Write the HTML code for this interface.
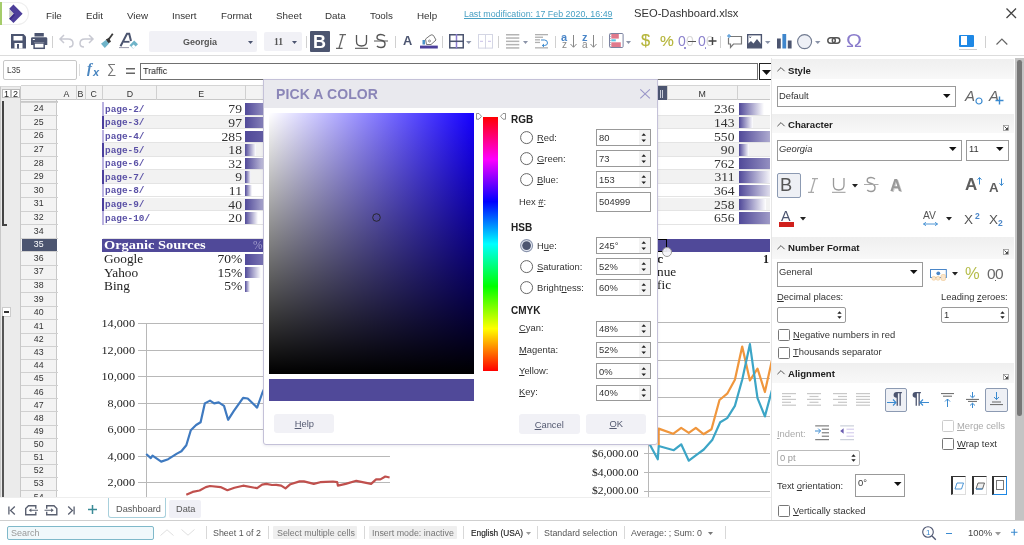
<!DOCTYPE html>
<html><head><meta charset="utf-8">
<style>
*{box-sizing:border-box;margin:0;padding:0}
html,body{width:1024px;height:545px;overflow:hidden;background:#fff}
body{position:relative;font-family:"Liberation Sans",sans-serif;font-size:9.6px;color:#333}
.a{position:absolute}
.t{position:absolute;white-space:nowrap;line-height:1;will-change:transform}
svg{position:absolute;overflow:visible}
.serif{font-family:"Liberation Serif",serif}
.mono{font-family:"Liberation Mono",monospace}
</style></head><body>

<div class="a" style="left:0px;top:85.5px;width:21px;height:411.5px;background:#ebebeb;border-left:1px solid #c8c8c8;border-right:1px solid #c8c8c8;border-top:1px solid #d8d8d8"></div>
<div class="a" style="left:56.8px;top:86px;width:1px;height:14.3px;background:#d0d0d0"></div>
<div class="a" style="left:1.5px;top:88.5px;width:9px;height:9.5px;background:#fff;border:1px solid #bbb"></div>
<div class="a" style="left:11px;top:88.5px;width:9px;height:9.5px;background:#fff;border:1px solid #bbb"></div>
<div class="t" style="left:3.5px;top:89.5px;font-size:9px;color:#222">1</div>
<div class="t" style="left:12.5px;top:89.5px;font-size:9px;color:#222">2</div>
<div class="a" style="left:2.3px;top:101px;width:1.6px;height:124.5px;background:#444"></div>
<div class="a" style="left:2.3px;top:224px;width:5px;height:1.6px;background:#444"></div>
<div class="a" style="left:1.5px;top:307px;width:9px;height:9.5px;background:#fff;border:1px solid #ccc"></div>
<div class="a" style="left:3.5px;top:311.2px;width:5px;height:1.6px;background:#333"></div>
<div class="a" style="left:2.3px;top:316px;width:1.6px;height:181px;background:#555"></div>
<div class="a" style="left:21px;top:85.3px;width:749px;height:15.0px;background:#f3f3f3;border-top:1px solid #d4d4d4;border-bottom:1px solid #c8c8c8"></div>
<div class="a" style="left:21px;top:100px;width:35.8px;height:397px;background:#f3f3f3;border-right:1px solid #c8c8c8"></div>
<div class="a" style="left:75.5px;top:85.3px;width:1px;height:15.0px;background:#d0d0d0"></div>
<div class="t" style="left:57px;top:89.5px;width:19px;text-align:center;font-size:8.8px;color:#333">A</div>
<div class="a" style="left:84.5px;top:85.3px;width:1px;height:15.0px;background:#d0d0d0"></div>
<div class="t" style="left:76px;top:89.5px;width:9px;text-align:center;font-size:8.8px;color:#333">B</div>
<div class="a" style="left:102.0px;top:85.3px;width:1px;height:15.0px;background:#d0d0d0"></div>
<div class="t" style="left:85px;top:89.5px;width:17.5px;text-align:center;font-size:8.8px;color:#333">C</div>
<div class="a" style="left:156.0px;top:85.3px;width:1px;height:15.0px;background:#d0d0d0"></div>
<div class="t" style="left:102.5px;top:89.5px;width:54.0px;text-align:center;font-size:8.8px;color:#333">D</div>
<div class="a" style="left:244.5px;top:85.3px;width:1px;height:15.0px;background:#d0d0d0"></div>
<div class="t" style="left:156.5px;top:89.5px;width:88.5px;text-align:center;font-size:8.8px;color:#333">E</div>
<div class="a" style="left:299.5px;top:85.3px;width:1px;height:15.0px;background:#d0d0d0"></div>
<div class="a" style="left:666.5px;top:85.3px;width:1px;height:15.0px;background:#d0d0d0"></div>
<div class="a" style="left:736.8px;top:85.3px;width:1px;height:15.0px;background:#d0d0d0"></div>
<div class="t" style="left:667px;top:89.5px;width:70.29999999999995px;text-align:center;font-size:8.8px;color:#333">M</div>
<div class="a" style="left:799.5px;top:85.3px;width:1px;height:15.0px;background:#d0d0d0"></div>
<div class="a" style="left:657px;top:85.8px;width:9.5px;height:14.5px;background:#4c5570"></div>
<div class="a" style="left:659.5px;top:89.5px;width:1.2px;height:8px;background:#c8ccd8"></div>
<div class="a" style="left:662px;top:89.5px;width:1.2px;height:8px;background:#c8ccd8"></div>
<div class="a" style="left:21px;top:101.8px;width:36.5px;height:1px;background:#d0d0d0"></div>
<div class="t" style="left:21px;top:104.2px;width:35.5px;text-align:center;font-size:8.8px;color:#333">24</div>
<div class="a" style="left:21px;top:115.39999999999999px;width:36.5px;height:1px;background:#d0d0d0"></div>
<div class="t" style="left:21px;top:117.8px;width:35.5px;text-align:center;font-size:8.8px;color:#333">25</div>
<div class="a" style="left:21px;top:129.0px;width:36.5px;height:1px;background:#d0d0d0"></div>
<div class="t" style="left:21px;top:131.4px;width:35.5px;text-align:center;font-size:8.8px;color:#333">26</div>
<div class="a" style="left:21px;top:142.6px;width:36.5px;height:1px;background:#d0d0d0"></div>
<div class="t" style="left:21px;top:145.0px;width:35.5px;text-align:center;font-size:8.8px;color:#333">27</div>
<div class="a" style="left:21px;top:156.2px;width:36.5px;height:1px;background:#d0d0d0"></div>
<div class="t" style="left:21px;top:158.6px;width:35.5px;text-align:center;font-size:8.8px;color:#333">28</div>
<div class="a" style="left:21px;top:169.79999999999998px;width:36.5px;height:1px;background:#d0d0d0"></div>
<div class="t" style="left:21px;top:172.2px;width:35.5px;text-align:center;font-size:8.8px;color:#333">29</div>
<div class="a" style="left:21px;top:183.39999999999998px;width:36.5px;height:1px;background:#d0d0d0"></div>
<div class="t" style="left:21px;top:185.79999999999998px;width:35.5px;text-align:center;font-size:8.8px;color:#333">30</div>
<div class="a" style="left:21px;top:196.99999999999997px;width:36.5px;height:1px;background:#d0d0d0"></div>
<div class="t" style="left:21px;top:199.39999999999998px;width:35.5px;text-align:center;font-size:8.8px;color:#333">31</div>
<div class="a" style="left:21px;top:210.59999999999997px;width:36.5px;height:1px;background:#d0d0d0"></div>
<div class="t" style="left:21px;top:212.99999999999997px;width:35.5px;text-align:center;font-size:8.8px;color:#333">32</div>
<div class="a" style="left:21px;top:224.19999999999996px;width:36.5px;height:1px;background:#d0d0d0"></div>
<div class="t" style="left:21px;top:226.59999999999997px;width:35.5px;text-align:center;font-size:8.8px;color:#333">34</div>
<div class="a" style="left:21px;top:237.79999999999995px;width:36.5px;height:1px;background:#d0d0d0"></div>
<div class="a" style="left:21.5px;top:238.79999999999995px;width:35.5px;height:12.6px;background:#4c5570"></div>
<div class="t" style="left:21px;top:240.19999999999996px;width:35.5px;text-align:center;font-size:8.8px;color:#fff">35</div>
<div class="a" style="left:21px;top:251.39999999999995px;width:36.5px;height:1px;background:#d0d0d0"></div>
<div class="t" style="left:21px;top:253.79999999999995px;width:35.5px;text-align:center;font-size:8.8px;color:#333">36</div>
<div class="a" style="left:21px;top:264.99999999999994px;width:36.5px;height:1px;background:#d0d0d0"></div>
<div class="t" style="left:21px;top:267.3999999999999px;width:35.5px;text-align:center;font-size:8.8px;color:#333">37</div>
<div class="a" style="left:21px;top:278.59999999999997px;width:36.5px;height:1px;background:#d0d0d0"></div>
<div class="t" style="left:21px;top:280.99999999999994px;width:35.5px;text-align:center;font-size:8.8px;color:#333">38</div>
<div class="a" style="left:21px;top:292.2px;width:36.5px;height:1px;background:#d0d0d0"></div>
<div class="t" style="left:21px;top:294.59999999999997px;width:35.5px;text-align:center;font-size:8.8px;color:#333">39</div>
<div class="a" style="left:21px;top:305.8px;width:36.5px;height:1px;background:#d0d0d0"></div>
<div class="t" style="left:21px;top:308.2px;width:35.5px;text-align:center;font-size:8.8px;color:#333">40</div>
<div class="a" style="left:21px;top:319.40000000000003px;width:36.5px;height:1px;background:#d0d0d0"></div>
<div class="t" style="left:21px;top:321.8px;width:35.5px;text-align:center;font-size:8.8px;color:#333">41</div>
<div class="a" style="left:21px;top:332.54px;width:36.5px;height:1px;background:#d0d0d0"></div>
<div class="t" style="left:21px;top:334.94px;width:35.5px;text-align:center;font-size:8.8px;color:#333">42</div>
<div class="a" style="left:21px;top:345.68px;width:36.5px;height:1px;background:#d0d0d0"></div>
<div class="t" style="left:21px;top:348.08px;width:35.5px;text-align:center;font-size:8.8px;color:#333">43</div>
<div class="a" style="left:21px;top:358.82px;width:36.5px;height:1px;background:#d0d0d0"></div>
<div class="t" style="left:21px;top:361.21999999999997px;width:35.5px;text-align:center;font-size:8.8px;color:#333">44</div>
<div class="a" style="left:21px;top:371.96px;width:36.5px;height:1px;background:#d0d0d0"></div>
<div class="t" style="left:21px;top:374.35999999999996px;width:35.5px;text-align:center;font-size:8.8px;color:#333">45</div>
<div class="a" style="left:21px;top:385.09999999999997px;width:36.5px;height:1px;background:#d0d0d0"></div>
<div class="t" style="left:21px;top:387.49999999999994px;width:35.5px;text-align:center;font-size:8.8px;color:#333">46</div>
<div class="a" style="left:21px;top:398.23999999999995px;width:36.5px;height:1px;background:#d0d0d0"></div>
<div class="t" style="left:21px;top:400.63999999999993px;width:35.5px;text-align:center;font-size:8.8px;color:#333">47</div>
<div class="a" style="left:21px;top:411.37999999999994px;width:36.5px;height:1px;background:#d0d0d0"></div>
<div class="t" style="left:21px;top:413.7799999999999px;width:35.5px;text-align:center;font-size:8.8px;color:#333">48</div>
<div class="a" style="left:21px;top:424.5199999999999px;width:36.5px;height:1px;background:#d0d0d0"></div>
<div class="t" style="left:21px;top:426.9199999999999px;width:35.5px;text-align:center;font-size:8.8px;color:#333">49</div>
<div class="a" style="left:21px;top:437.6599999999999px;width:36.5px;height:1px;background:#d0d0d0"></div>
<div class="t" style="left:21px;top:440.0599999999999px;width:35.5px;text-align:center;font-size:8.8px;color:#333">50</div>
<div class="a" style="left:21px;top:450.7999999999999px;width:36.5px;height:1px;background:#d0d0d0"></div>
<div class="t" style="left:21px;top:453.1999999999999px;width:35.5px;text-align:center;font-size:8.8px;color:#333">51</div>
<div class="a" style="left:21px;top:463.9399999999999px;width:36.5px;height:1px;background:#d0d0d0"></div>
<div class="t" style="left:21px;top:466.33999999999986px;width:35.5px;text-align:center;font-size:8.8px;color:#333">52</div>
<div class="a" style="left:21px;top:477.07999999999987px;width:36.5px;height:1px;background:#d0d0d0"></div>
<div class="t" style="left:21px;top:479.47999999999985px;width:35.5px;text-align:center;font-size:8.8px;color:#333">53</div>
<div class="a" style="left:21px;top:490.21999999999986px;width:36.5px;height:1px;background:#d0d0d0"></div>
<div class="t" style="left:21px;top:492.61999999999983px;width:35.5px;text-align:center;font-size:8.8px;color:#333">54</div>
<div class="a" style="left:21px;top:101.3px;width:36.5px;height:1px;background:#c8c8c8"></div>
<div class="a" style="left:102.5px;top:102.3px;width:160.5px;height:13.6px;background:#fff;border-bottom:1px solid #e4e4e4"></div>
<div class="a" style="left:657px;top:102.3px;width:113px;height:13.6px;background:#fff;border-bottom:1px solid #e4e4e4"></div>
<div class="a" style="left:101.8px;top:102.3px;width:2px;height:13.6px;background:#b9b1e0"></div>
<div class="t" style="left:104.5px;top:104.7px;font-family:'Liberation Mono',monospace;font-weight:bold;font-size:9.4px;color:#5a51a6">page-2/</div>
<div class="t serif" style="left:150px;top:103.3px;width:92px;text-align:right;font-size:12.4px;color:#333;transform:scaleX(1.1);transform-origin:right">79</div>
<div class="a" style="left:245px;top:103.3px;width:18px;height:11.6px;overflow:hidden"><div style="width:50px;height:100%;background:linear-gradient(90deg,#504999,#fff)"></div></div>
<div class="t serif" style="left:680px;top:103.3px;width:54.5px;text-align:right;font-size:12.4px;color:#333;transform:scaleX(1.1);transform-origin:right">236</div>
<div class="a" style="left:738.5px;top:103.3px;width:25px;height:11.6px;overflow:hidden"><div style="width:25px;height:100%;background:linear-gradient(90deg,#504999,#fff)"></div></div>
<div class="a" style="left:102.5px;top:115.89999999999999px;width:160.5px;height:13.6px;background:#f2f2f2;border-bottom:1px solid #e4e4e4"></div>
<div class="a" style="left:657px;top:115.89999999999999px;width:113px;height:13.6px;background:#f2f2f2;border-bottom:1px solid #e4e4e4"></div>
<div class="a" style="left:101.8px;top:115.89999999999999px;width:2px;height:13.6px;background:#4b3f9e"></div>
<div class="t" style="left:104.5px;top:118.3px;font-family:'Liberation Mono',monospace;font-weight:bold;font-size:9.4px;color:#5a51a6">page-3/</div>
<div class="t serif" style="left:150px;top:116.89999999999999px;width:92px;text-align:right;font-size:12.4px;color:#333;transform:scaleX(1.1);transform-origin:right">97</div>
<div class="a" style="left:245px;top:116.89999999999999px;width:18px;height:11.6px;overflow:hidden"><div style="width:60px;height:100%;background:linear-gradient(90deg,#504999,#fff)"></div></div>
<div class="t serif" style="left:680px;top:116.89999999999999px;width:54.5px;text-align:right;font-size:12.4px;color:#333;transform:scaleX(1.1);transform-origin:right">143</div>
<div class="a" style="left:738.5px;top:116.89999999999999px;width:14px;height:11.6px;overflow:hidden"><div style="width:14px;height:100%;background:linear-gradient(90deg,#504999,#fff)"></div></div>
<div class="a" style="left:102.5px;top:129.5px;width:160.5px;height:13.6px;background:#fff;border-bottom:1px solid #e4e4e4"></div>
<div class="a" style="left:657px;top:129.5px;width:113px;height:13.6px;background:#fff;border-bottom:1px solid #e4e4e4"></div>
<div class="a" style="left:101.8px;top:129.5px;width:2px;height:13.6px;background:#b9b1e0"></div>
<div class="t" style="left:104.5px;top:131.9px;font-family:'Liberation Mono',monospace;font-weight:bold;font-size:9.4px;color:#5a51a6">page-4/</div>
<div class="t serif" style="left:150px;top:130.5px;width:92px;text-align:right;font-size:12.4px;color:#333;transform:scaleX(1.1);transform-origin:right">285</div>
<div class="a" style="left:245px;top:130.5px;width:18px;height:11.6px;overflow:hidden"><div style="width:180px;height:100%;background:linear-gradient(90deg,#504999,#fff)"></div></div>
<div class="t serif" style="left:680px;top:130.5px;width:54.5px;text-align:right;font-size:12.4px;color:#333;transform:scaleX(1.1);transform-origin:right">550</div>
<div class="a" style="left:738.5px;top:130.5px;width:31.5px;height:11.6px;overflow:hidden"><div style="width:58px;height:100%;background:linear-gradient(90deg,#504999,#fff)"></div></div>
<div class="a" style="left:102.5px;top:143.1px;width:160.5px;height:13.6px;background:#f2f2f2;border-bottom:1px solid #e4e4e4"></div>
<div class="a" style="left:657px;top:143.1px;width:113px;height:13.6px;background:#f2f2f2;border-bottom:1px solid #e4e4e4"></div>
<div class="a" style="left:101.8px;top:143.1px;width:2px;height:13.6px;background:#4b3f9e"></div>
<div class="t" style="left:104.5px;top:145.5px;font-family:'Liberation Mono',monospace;font-weight:bold;font-size:9.4px;color:#5a51a6">page-5/</div>
<div class="t serif" style="left:150px;top:144.1px;width:92px;text-align:right;font-size:12.4px;color:#333;transform:scaleX(1.1);transform-origin:right">18</div>
<div class="a" style="left:245px;top:144.1px;width:11px;height:11.6px;overflow:hidden"><div style="width:11px;height:100%;background:linear-gradient(90deg,#504999,#fff)"></div></div>
<div class="t serif" style="left:680px;top:144.1px;width:54.5px;text-align:right;font-size:12.4px;color:#333;transform:scaleX(1.1);transform-origin:right">90</div>
<div class="a" style="left:738.5px;top:144.1px;width:10px;height:11.6px;overflow:hidden"><div style="width:10px;height:100%;background:linear-gradient(90deg,#504999,#fff)"></div></div>
<div class="a" style="left:102.5px;top:156.7px;width:160.5px;height:13.6px;background:#fff;border-bottom:1px solid #e4e4e4"></div>
<div class="a" style="left:657px;top:156.7px;width:113px;height:13.6px;background:#fff;border-bottom:1px solid #e4e4e4"></div>
<div class="a" style="left:101.8px;top:156.7px;width:2px;height:13.6px;background:#b9b1e0"></div>
<div class="t" style="left:104.5px;top:159.1px;font-family:'Liberation Mono',monospace;font-weight:bold;font-size:9.4px;color:#5a51a6">page-6/</div>
<div class="t serif" style="left:150px;top:157.7px;width:92px;text-align:right;font-size:12.4px;color:#333;transform:scaleX(1.1);transform-origin:right">32</div>
<div class="a" style="left:245px;top:157.7px;width:18px;height:11.6px;overflow:hidden"><div style="width:28px;height:100%;background:linear-gradient(90deg,#504999,#fff)"></div></div>
<div class="t serif" style="left:680px;top:157.7px;width:54.5px;text-align:right;font-size:12.4px;color:#333;transform:scaleX(1.1);transform-origin:right">762</div>
<div class="a" style="left:738.5px;top:157.7px;width:31.5px;height:11.6px;overflow:hidden"><div style="width:80px;height:100%;background:linear-gradient(90deg,#504999,#fff)"></div></div>
<div class="a" style="left:102.5px;top:170.29999999999998px;width:160.5px;height:13.6px;background:#f2f2f2;border-bottom:1px solid #e4e4e4"></div>
<div class="a" style="left:657px;top:170.29999999999998px;width:113px;height:13.6px;background:#f2f2f2;border-bottom:1px solid #e4e4e4"></div>
<div class="a" style="left:101.8px;top:170.29999999999998px;width:2px;height:13.6px;background:#4b3f9e"></div>
<div class="t" style="left:104.5px;top:172.7px;font-family:'Liberation Mono',monospace;font-weight:bold;font-size:9.4px;color:#5a51a6">page-7/</div>
<div class="t serif" style="left:150px;top:171.29999999999998px;width:92px;text-align:right;font-size:12.4px;color:#333;transform:scaleX(1.1);transform-origin:right">9</div>
<div class="a" style="left:245px;top:171.29999999999998px;width:6px;height:11.6px;overflow:hidden"><div style="width:6px;height:100%;background:linear-gradient(90deg,#504999,#fff)"></div></div>
<div class="t serif" style="left:680px;top:171.29999999999998px;width:54.5px;text-align:right;font-size:12.4px;color:#333;transform:scaleX(1.1);transform-origin:right">311</div>
<div class="a" style="left:738.5px;top:171.29999999999998px;width:31.5px;height:11.6px;overflow:hidden"><div style="width:33px;height:100%;background:linear-gradient(90deg,#504999,#fff)"></div></div>
<div class="a" style="left:102.5px;top:183.89999999999998px;width:160.5px;height:13.6px;background:#fff;border-bottom:1px solid #e4e4e4"></div>
<div class="a" style="left:657px;top:183.89999999999998px;width:113px;height:13.6px;background:#fff;border-bottom:1px solid #e4e4e4"></div>
<div class="a" style="left:101.8px;top:183.89999999999998px;width:2px;height:13.6px;background:#b9b1e0"></div>
<div class="t" style="left:104.5px;top:186.29999999999998px;font-family:'Liberation Mono',monospace;font-weight:bold;font-size:9.4px;color:#5a51a6">page-8/</div>
<div class="t serif" style="left:150px;top:184.89999999999998px;width:92px;text-align:right;font-size:12.4px;color:#333;transform:scaleX(1.1);transform-origin:right">11</div>
<div class="a" style="left:245px;top:184.89999999999998px;width:6.5px;height:11.6px;overflow:hidden"><div style="width:6.5px;height:100%;background:linear-gradient(90deg,#504999,#fff)"></div></div>
<div class="t serif" style="left:680px;top:184.89999999999998px;width:54.5px;text-align:right;font-size:12.4px;color:#333;transform:scaleX(1.1);transform-origin:right">364</div>
<div class="a" style="left:738.5px;top:184.89999999999998px;width:31.5px;height:11.6px;overflow:hidden"><div style="width:38px;height:100%;background:linear-gradient(90deg,#504999,#fff)"></div></div>
<div class="a" style="left:102.5px;top:197.49999999999997px;width:160.5px;height:13.6px;background:#f2f2f2;border-bottom:1px solid #e4e4e4"></div>
<div class="a" style="left:657px;top:197.49999999999997px;width:113px;height:13.6px;background:#f2f2f2;border-bottom:1px solid #e4e4e4"></div>
<div class="a" style="left:101.8px;top:197.49999999999997px;width:2px;height:13.6px;background:#4b3f9e"></div>
<div class="t" style="left:104.5px;top:199.89999999999998px;font-family:'Liberation Mono',monospace;font-weight:bold;font-size:9.4px;color:#5a51a6">page-9/</div>
<div class="t serif" style="left:150px;top:198.49999999999997px;width:92px;text-align:right;font-size:12.4px;color:#333;transform:scaleX(1.1);transform-origin:right">40</div>
<div class="a" style="left:245px;top:198.49999999999997px;width:18px;height:11.6px;overflow:hidden"><div style="width:36px;height:100%;background:linear-gradient(90deg,#504999,#fff)"></div></div>
<div class="t serif" style="left:680px;top:198.49999999999997px;width:54.5px;text-align:right;font-size:12.4px;color:#333;transform:scaleX(1.1);transform-origin:right">258</div>
<div class="a" style="left:738.5px;top:198.49999999999997px;width:27px;height:11.6px;overflow:hidden"><div style="width:27px;height:100%;background:linear-gradient(90deg,#504999,#fff)"></div></div>
<div class="a" style="left:102.5px;top:211.09999999999997px;width:160.5px;height:13.6px;background:#fff;border-bottom:1px solid #e4e4e4"></div>
<div class="a" style="left:657px;top:211.09999999999997px;width:113px;height:13.6px;background:#fff;border-bottom:1px solid #e4e4e4"></div>
<div class="a" style="left:101.8px;top:211.09999999999997px;width:2px;height:13.6px;background:#b9b1e0"></div>
<div class="t" style="left:104.5px;top:213.49999999999997px;font-family:'Liberation Mono',monospace;font-weight:bold;font-size:9.4px;color:#5a51a6">page-10/</div>
<div class="t serif" style="left:150px;top:212.09999999999997px;width:92px;text-align:right;font-size:12.4px;color:#333;transform:scaleX(1.1);transform-origin:right">20</div>
<div class="a" style="left:245px;top:212.09999999999997px;width:13px;height:11.6px;overflow:hidden"><div style="width:13px;height:100%;background:linear-gradient(90deg,#504999,#fff)"></div></div>
<div class="t serif" style="left:680px;top:212.09999999999997px;width:54.5px;text-align:right;font-size:12.4px;color:#333;transform:scaleX(1.1);transform-origin:right">656</div>
<div class="a" style="left:738.5px;top:212.09999999999997px;width:31.5px;height:11.6px;overflow:hidden"><div style="width:69px;height:100%;background:linear-gradient(90deg,#504999,#fff)"></div></div>
<div class="a" style="left:102.5px;top:237.79999999999995px;width:160.5px;height:1px;background:#e4e4e4"></div>
<div class="a" style="left:102px;top:238.5px;width:161px;height:13.8px;background:#504999"></div>
<div class="a" style="left:657px;top:238.5px;width:113px;height:13.8px;background:#504999"></div>
<div class="t" style="left:104.2px;top:239.2px;font-family:'Liberation Serif',serif;font-weight:bold;font-size:12px;color:#fff;transform:scaleX(1.2);transform-origin:left">Organic Sources</div>
<div class="t" style="left:252.7px;top:240px;font-family:'Liberation Serif',serif;font-size:11.5px;color:#a29dcc">%</div>
<div class="t" style="left:104.2px;top:253.89999999999995px;font-family:'Liberation Serif',serif;font-size:11.9px;color:#222;transform:scaleX(1.12);transform-origin:left">Google</div>
<div class="t serif" style="left:200px;top:254.09999999999994px;width:42.4px;text-align:right;font-size:11.9px;color:#222;transform:scaleX(1.14);transform-origin:right">70%</div>
<div class="a" style="left:245.3px;top:253.49999999999994px;width:18px;height:11.2px;background:linear-gradient(90deg,#504999,#7a74b3)"></div>
<div class="t" style="left:104.2px;top:267.49999999999994px;font-family:'Liberation Serif',serif;font-size:11.9px;color:#222;transform:scaleX(1.12);transform-origin:left">Yahoo</div>
<div class="t serif" style="left:200px;top:267.69999999999993px;width:42.4px;text-align:right;font-size:11.9px;color:#222;transform:scaleX(1.14);transform-origin:right">15%</div>
<div class="a" style="left:245.3px;top:267.09999999999997px;width:16px;height:11.2px;background:linear-gradient(90deg,#504999,#fff)"></div>
<div class="t" style="left:104.2px;top:281.09999999999997px;font-family:'Liberation Serif',serif;font-size:11.9px;color:#222;transform:scaleX(1.12);transform-origin:left">Bing</div>
<div class="t serif" style="left:200px;top:281.29999999999995px;width:42.4px;text-align:right;font-size:11.9px;color:#222;transform:scaleX(1.14);transform-origin:right">5%</div>
<div class="a" style="left:245.3px;top:280.7px;width:5px;height:11.2px;background:linear-gradient(90deg,#504999,#fff)"></div>
<div class="t" style="left:657px;top:253.3px;font-family:'Liberation Serif',serif;font-weight:bold;font-size:12px;color:#222;transform:scaleX(1.15);transform-origin:left">c</div>
<div class="t" style="left:657.3px;top:266.6px;font-family:'Liberation Serif',serif;font-size:11.9px;color:#222;transform:scaleX(1.12);transform-origin:left">nue</div>
<div class="t" style="left:657.3px;top:280.2px;font-family:'Liberation Serif',serif;font-size:11.9px;color:#222;transform:scaleX(1.12);transform-origin:left">fic</div>
<div class="t" style="left:763px;top:253.3px;font-family:'Liberation Serif',serif;font-weight:bold;font-size:12px;color:#222">1</div>
<div class="a" style="left:650px;top:238.6px;width:17.2px;height:13.8px;border-top:1.2px solid #000;border-right:1.2px solid #000;border-bottom:1.2px solid #000"></div>
<div class="a" style="left:662px;top:247px;width:10px;height:10px;border-radius:50%;background:rgba(245,245,250,.92);border:1px solid #999"></div>
<div class="a" style="left:138px;top:323px;width:125px;height:1px;background:#b8b8b8"></div>
<div class="t serif" style="left:80px;top:319.09999999999997px;width:55px;text-align:right;font-size:10.6px;color:#222;transform:scaleX(1.15);transform-origin:right">14,000</div>
<div class="a" style="left:138px;top:350px;width:125px;height:1px;background:#b8b8b8"></div>
<div class="t serif" style="left:80px;top:345.59999999999997px;width:55px;text-align:right;font-size:10.6px;color:#222;transform:scaleX(1.15);transform-origin:right">12,000</div>
<div class="a" style="left:138px;top:376px;width:125px;height:1px;background:#b8b8b8"></div>
<div class="t serif" style="left:80px;top:372.09999999999997px;width:55px;text-align:right;font-size:10.6px;color:#222;transform:scaleX(1.15);transform-origin:right">10,000</div>
<div class="a" style="left:138px;top:403px;width:125px;height:1px;background:#b8b8b8"></div>
<div class="t serif" style="left:80px;top:398.59999999999997px;width:55px;text-align:right;font-size:10.6px;color:#222;transform:scaleX(1.15);transform-origin:right">8,000</div>
<div class="a" style="left:138px;top:429px;width:125px;height:1px;background:#b8b8b8"></div>
<div class="t serif" style="left:80px;top:425.09999999999997px;width:55px;text-align:right;font-size:10.6px;color:#222;transform:scaleX(1.15);transform-origin:right">6,000</div>
<div class="a" style="left:138px;top:456px;width:252.3px;height:1px;background:#b8b8b8"></div>
<div class="t serif" style="left:80px;top:451.59999999999997px;width:55px;text-align:right;font-size:10.6px;color:#222;transform:scaleX(1.15);transform-origin:right">4,000</div>
<div class="a" style="left:138px;top:482px;width:252.3px;height:1px;background:#b8b8b8"></div>
<div class="t serif" style="left:80px;top:478.09999999999997px;width:55px;text-align:right;font-size:10.6px;color:#222;transform:scaleX(1.15);transform-origin:right">2,000</div>
<div class="a" style="left:146px;top:323.5px;width:1px;height:173.5px;background:#b8b8b8"></div>
<svg style="left:0;top:0" width="1024" height="545"><polyline points="146.2,454 150.8,458.1 152.5,455.7 161.2,461.6 168.2,459.2 176.9,453.6 181.4,451.2 186.3,445.2 190.8,430.2 196.1,425 200.6,422.2 204.8,403.4 210,400.6 214.2,403.4 218.7,402.4 224,405.9 228.1,419.8 233.7,411.1 243.1,397.8 247.7,398.5 257.1,407.6 262.3,393 266,385" fill="none" stroke="#3f7ac0" stroke-width="2.2" stroke-linejoin="round"/><polyline points="186.3,494.7 192.6,491.9 199.6,490.5 205.8,487.1 210,486 220.5,487.1 227.4,490.2 234.4,487.8 243.1,485.7 257.1,488.2 262.1,484.6 266.3,483.9 272,485 276.2,484.8 281.2,485.6 285.5,488.4 290.4,484.2 299.6,481.4 303.9,481.4 313.8,483.9 320.2,482.2 325.8,481.8 332.9,481.5 337.2,482.2 337.9,485.6 345.7,483.9 356.3,480.8 371.1,483.9 376.1,479.4 380.4,479.4 385.3,476.5 389.6,477.5" fill="none" stroke="#c0504d" stroke-width="2.2" stroke-linejoin="round"/></svg>
<div class="a" style="left:644.4px;top:322px;width:126px;height:1px;background:#b8b8b8"></div>
<div class="a" style="left:644.4px;top:342px;width:126px;height:1px;background:#b8b8b8"></div>
<div class="a" style="left:644.4px;top:360px;width:126px;height:1px;background:#b8b8b8"></div>
<div class="a" style="left:644.4px;top:378px;width:126px;height:1px;background:#b8b8b8"></div>
<div class="a" style="left:644.4px;top:397px;width:126px;height:1px;background:#b8b8b8"></div>
<div class="a" style="left:644.4px;top:416px;width:126px;height:1px;background:#b8b8b8"></div>
<div class="a" style="left:644.4px;top:434px;width:126px;height:1px;background:#b8b8b8"></div>
<div class="a" style="left:644.4px;top:453px;width:126px;height:1px;background:#b8b8b8"></div>
<div class="a" style="left:644.4px;top:472px;width:126px;height:1px;background:#b8b8b8"></div>
<div class="a" style="left:644.4px;top:491px;width:126px;height:1px;background:#b8b8b8"></div>
<div class="t serif" style="left:570px;top:448.8px;width:68.5px;text-align:right;font-size:10.6px;color:#222;transform:scaleX(1.1);transform-origin:right">$6,000.00</div>
<div class="t serif" style="left:570px;top:467.7px;width:68.5px;text-align:right;font-size:10.6px;color:#222;transform:scaleX(1.1);transform-origin:right">$4,000.00</div>
<div class="t serif" style="left:570px;top:486.40000000000003px;width:68.5px;text-align:right;font-size:10.6px;color:#222;transform:scaleX(1.1);transform-origin:right">$2,000.00</div>
<div class="a" style="left:648px;top:320px;width:1px;height:177px;background:#b8b8b8"></div>
<svg style="left:0;top:0" width="1024" height="545"><polyline points="658.7,445.5 658.7,428.6 673.1,433.8 681.2,427.9 688.8,432.8 695.8,427.9 703.5,434.2 711.5,429.3 719.5,400 727.2,393.7 734.9,379.8 742.2,346.6 749.9,380.5 757.5,368.6 764.9,392 772,360" fill="none" stroke="#f0963c" stroke-width="2.2" stroke-linejoin="round"/><polyline points="648.7,442.5 657.8,459.3 658.7,446 673.8,450.2 681.2,444.3 688.8,460.7 696.5,454.8 703.8,449.5 712.2,440.1 720.2,422.3 727.2,418.1 734.9,405.9 742.2,379.8 749.9,344.2 757.5,398.2 764.9,416.4 772,390" fill="none" stroke="#3ca5c6" stroke-width="2.2" stroke-linejoin="round"/></svg>
<div class="a" style="left:0px;top:0px;width:1024px;height:56px;background:#fff"></div>
<div class="a" style="left:0px;top:2px;width:2.1px;height:23.4px;background:#a5cc6a"></div>
<div class="a" style="left:2px;top:2px;width:26.5px;height:23.4px;border:1px solid #eee;border-left:none;border-radius:0 11.5px 11.5px 0;background:#fff"></div>
<svg style="left:0px;top:0px;" width="30" height="28" viewBox="0 0 30 28"><polygon points="9.2,9.3 13.9,13.8 9.2,18.3" fill="#c8c8c8"/><polygon points="13.45,4.6 22.6,13.8 13.45,22.9 9.2,18.7 13.9,13.8 9.2,8.8" fill="#4d3f9a"/><polygon points="9.2,18.7 13.9,13.8 15,15 10.5,19.9" fill="#3a2a88"/></svg>
<div class="t" style="left:46.3px;top:10.6px;font-size:9.8px;color:#333">File</div>
<div class="t" style="left:86.2px;top:10.6px;font-size:9.8px;color:#333">Edit</div>
<div class="t" style="left:127.3px;top:10.6px;font-size:9.8px;color:#333">View</div>
<div class="t" style="left:172.2px;top:10.6px;font-size:9.8px;color:#333">Insert</div>
<div class="t" style="left:221px;top:10.6px;font-size:9.8px;color:#333">Format</div>
<div class="t" style="left:276.2px;top:10.6px;font-size:9.8px;color:#333">Sheet</div>
<div class="t" style="left:325.3px;top:10.6px;font-size:9.8px;color:#333">Data</div>
<div class="t" style="left:370px;top:10.6px;font-size:9.8px;color:#333">Tools</div>
<div class="t" style="left:417.3px;top:10.6px;font-size:9.8px;color:#333">Help</div>
<div class="t" style="left:464px;top:9.9px;font-size:8.9px;color:#4aa1c4;text-decoration:underline">Last modification: 17 Feb 2020, 16:49</div>
<div class="t" style="left:634px;top:7.8px;font-size:11.2px;color:#333">SEO-Dashboard.xlsx</div>
<svg style="left:1006.4px;top:7.9px;" width="10.5" height="10.5" viewBox="0 0 10.5 10.5"><path d="M0.5,0.5L10,10M10,0.5L0.5,10" stroke="#444" stroke-width="1.3"/></svg>
<div class="a" style="left:0px;top:54.8px;width:1024px;height:1.6px;background:#dcdcdc"></div>
<svg style="left:11px;top:33.7px;" width="15" height="14.6" viewBox="0 0 15 14.6"><path d="M0,0H12.5L15,2.5V14.6H0Z" fill="#4c5570"/><rect x="2.5" y="2" width="9" height="4.5" fill="#fff"/><rect x="3.5" y="9" width="8" height="5.6" fill="#fff"/><rect x="6" y="10" width="2" height="4.6" fill="#4c5570"/></svg>
<svg style="left:30.7px;top:33px;" width="16.3" height="15.3" viewBox="0 0 16.3 15.3"><rect x="3.5" y="0" width="9.3" height="3.5" fill="#4c5570"/><path d="M0,5.5Q0,4.2 1.5,4.2H14.8Q16.3,4.2 16.3,5.5V12H13.2V9H3.1V12H0Z" fill="#4c5570"/><rect x="3.1" y="10" width="10.1" height="5.3" fill="none" stroke="#4c5570" stroke-width="1.5"/><rect x="1.8" y="6" width="2" height="1" fill="#fff"/></svg>
<div class="a" style="left:51.8px;top:35.6px;width:1px;height:12.100000000000001px;background:#d0d0d0"></div>
<svg style="left:58.6px;top:34px;" width="15" height="14" viewBox="0 0 15 14"><path d="M5,1L1,5L5,9M1,5H9Q14,5 14,9.5Q14,13 10,13" fill="none" stroke="#c8c9d2" stroke-width="1.5"/></svg>
<svg style="left:79px;top:34px;" width="15" height="14" viewBox="0 0 15 14"><path d="M10,1L14,5L10,9M14,5H6Q1,5 1,9.5Q1,13 5,13" fill="none" stroke="#c8c9d2" stroke-width="1.5"/></svg>
<svg style="left:101px;top:33px;" width="12.5" height="15" viewBox="0 0 12.5 15"><path d="M11.8,0.8L7.2,7" stroke="#3a3a3a" stroke-width="1.8"/><path d="M4.8,6.5L8,4.8L10,8.8L7,10.5Z" fill="#3a3a3a"/><path d="M0,10.8L4.8,7L8,10.6L3.8,15Z" fill="#6fb4c9"/></svg>
<svg style="left:119.3px;top:33.3px;" width="20" height="15.5" viewBox="0 0 20 15.5"><path d="M1.5,13.3L8,0.8H10.2L12,8" fill="none" stroke="#4c5570" stroke-width="2"/><path d="M4.5,8.8H10.5" stroke="#4c5570" stroke-width="1.8"/><path d="M0,14.6H10" stroke="#99a" stroke-width="1"/><path d="M10.5,12.2L15.2,7.5L19,11.2L14.3,15.8Z" fill="#6fb4c9"/><path d="M12.5,13.6L14.6,11.5L16.8,13.6L14.6,15.7Z" fill="#fff"/></svg>
<div class="a" style="left:149.2px;top:31.3px;width:107.8px;height:20.3px;background:#f1f1f6;border-radius:2px"></div>
<div class="t" style="left:182.8px;top:37.6px;font-size:9px;font-weight:bold;color:#555">Georgia</div>
<svg style="left:247.5px;top:40.8px;" width="5" height="3" viewBox="0 0 5 3"><path d="M0,0H5L2.5,3Z" fill="#4c5570"/></svg>
<div class="a" style="left:263.9px;top:31.8px;width:38.1px;height:19.7px;background:#f1f1f6;border-radius:2px"></div>
<div class="t" style="left:274px;top:37.2px;font-family:'Liberation Serif',serif;font-size:9.6px;font-weight:bold;color:#555">11</div>
<svg style="left:292px;top:40.8px;" width="5" height="3" viewBox="0 0 5 3"><path d="M0,0H5L2.5,3Z" fill="#4c5570"/></svg>
<div class="a" style="left:305.9px;top:35.6px;width:1px;height:12.100000000000001px;background:#d0d0d0"></div>
<div class="a" style="left:309.8px;top:30.8px;width:20.1px;height:21.3px;background:#4c5570;border-radius:1px"></div>
<div class="t" style="left:312.6px;top:33.2px;font-size:18px;font-weight:bold;color:#fff">B</div>
<svg style="left:336px;top:33.5px;" width="10" height="15" viewBox="0 0 10 15"><path d="M7,0.7L3,14.3M3.5,0.7H10M0,14.3H6.5" fill="none" stroke="#666" stroke-width="1.3"/></svg>
<svg style="left:354.5px;top:34.5px;" width="13" height="14" viewBox="0 0 13 14"><path d="M1.5,0V6.5Q1.5,11 6.5,11Q11.5,11 11.5,6.5V0" fill="none" stroke="#555" stroke-width="1.3"/><path d="M0,13.3H13" stroke="#555" stroke-width="1.1"/></svg>
<svg style="left:374px;top:34px;" width="14" height="14" viewBox="0 0 14 14"><path d="M11,2Q9,0.5 6.8,0.5Q3,0.5 3,3.5Q3,5.5 7,6.2Q11,7 11,10Q11,13.5 7,13.5Q4,13.5 3,12" fill="none" stroke="#555" stroke-width="1.4"/><path d="M0,7H14" stroke="#555" stroke-width="1"/></svg>
<div class="a" style="left:394.5px;top:35.6px;width:1px;height:12.100000000000001px;background:#d0d0d0"></div>
<div class="t" style="left:403.2px;top:34.5px;font-size:12.8px;font-weight:bold;color:#4c5570">A</div>
<svg style="left:420px;top:33.5px;" width="18" height="14.5" viewBox="0 0 18 14.5"><path d="M5.5,5L10,1.5Q12,0 13.5,1.5L16,6L11,10.5H6.5Z" fill="none" stroke="#777" stroke-width="1"/><circle cx="9.5" cy="7" r="1" fill="none" stroke="#777" stroke-width=".8"/><rect x="2.5" y="6" width="2.5" height="4.5" fill="#4a90c8"/><rect x="0" y="11.6" width="17.8" height="2.9" fill="#4b3f9b"/></svg>
<div class="a" style="left:442.0px;top:35.6px;width:1px;height:12.100000000000001px;background:#d0d0d0"></div>
<svg style="left:448.6px;top:33.7px;" width="15" height="14.6" viewBox="0 0 15 14.6"><rect x=".75" y=".75" width="13.5" height="13.1" fill="none" stroke="#4c5570" stroke-width="1.5"/><path d="M7.5,0V14.6" stroke="#8c7dd0" stroke-width="1.5"/><path d="M0,7.3H15" stroke="#4c5570" stroke-width="1.5"/></svg>
<svg style="left:466px;top:40.8px;" width="5.5" height="3" viewBox="0 0 5.5 3"><path d="M0,0H5.5L2.75,3Z" fill="#8a93a8"/></svg>
<svg style="left:477.8px;top:33.7px;" width="15" height="14.6" viewBox="0 0 15 14.6"><rect x=".5" y=".5" width="14" height="13.6" fill="none" stroke="#d4d6e4" stroke-width="1"/><path d="M7.5,0V14.6" stroke="#d4d6e4" stroke-width="1"/><path d="M2,7.3H5M13,7.3H10" stroke="#c8bfe8" stroke-width="1"/></svg>
<div class="a" style="left:498.2px;top:35.6px;width:1px;height:12.100000000000001px;background:#d0d0d0"></div>
<svg style="left:505.7px;top:33.6px;" width="13.3" height="14.7" viewBox="0 0 13.3 14.7"><rect x="0" y="0.0" width="13.3" height="1.5" fill="#b4b4b4"/><rect x="0" y="3.3" width="13.3" height="1.5" fill="#b4b4b4"/><rect x="0" y="6.6" width="13.3" height="1.5" fill="#b4b4b4"/><rect x="0" y="9.899999999999999" width="13.3" height="1.5" fill="#b4b4b4"/><rect x="0" y="13.2" width="13.3" height="1.5" fill="#b4b4b4"/></svg>
<svg style="left:523px;top:40.8px;" width="5" height="3" viewBox="0 0 5 3"><path d="M0,0H5L2.5,3Z" fill="#8a93a8"/></svg>
<svg style="left:534.9px;top:33.6px;" width="14" height="14.7" viewBox="0 0 14 14.7"><rect x="0" y="0" width="13" height="1.3" fill="#b0b0b0"/><rect x="0" y="2.6" width="8" height="1.3" fill="#b0b0b0"/><rect x="0" y="5.2" width="5" height="1.3" fill="#b0b0b0"/><rect x="0" y="7.8" width="5" height="1.3" fill="#b0b0b0"/><rect x="0" y="13.2" width="13" height="1.3" fill="#b0b0b0"/><path d="M6,6H9.5Q12.5,6 12.5,9Q12.5,11.5 9.5,11.5H7.5M9,10L7.3,11.5L9,13" fill="none" stroke="#3a8ad0" stroke-width="1"/></svg>
<div class="a" style="left:554.7px;top:35.6px;width:1px;height:12.100000000000001px;background:#d0d0d0"></div>
<div class="t" style="left:561px;top:31.6px;font-size:11px;font-weight:bold;color:#4a86c8">a</div>
<div class="t" style="left:561.7px;top:40.2px;font-size:10px;color:#888">z</div>
<svg style="left:570px;top:35px;" width="7" height="13" viewBox="0 0 7 13"><path d="M3.5,0V12M0.5,9L3.5,12.3L6.5,9" fill="none" stroke="#888" stroke-width="1"/></svg>
<div class="t" style="left:581.5px;top:31.6px;font-size:11px;font-weight:bold;color:#4a86c8">z</div>
<div class="t" style="left:581.8px;top:40.2px;font-size:10px;color:#888">a</div>
<svg style="left:590px;top:35px;" width="7" height="13" viewBox="0 0 7 13"><path d="M3.5,0V12M0.5,9L3.5,12.3L6.5,9" fill="none" stroke="#888" stroke-width="1"/></svg>
<div class="a" style="left:602.1px;top:35.6px;width:1px;height:12.100000000000001px;background:#d0d0d0"></div>
<svg style="left:609.2px;top:33.3px;" width="14.6" height="15" viewBox="0 0 14.6 15"><rect x=".5" y=".5" width="13.6" height="14" rx="1" fill="#fff" stroke="#7a82a0" stroke-width="1"/><rect x="2.3" y="1" width="7.5" height="4.6" fill="#e07a8c"/><rect x="2.3" y="6.3" width="4.5" height="2" fill="#58c4e4"/><rect x="2.3" y="9.3" width="9.5" height="4.7" fill="#e07a8c"/><path d="M1.6,1V14" stroke="#7a82a0" stroke-width=".6" stroke-dasharray="1,1"/></svg>
<svg style="left:626px;top:40.8px;" width="5" height="3" viewBox="0 0 5 3"><path d="M0,0H5L2.5,3Z" fill="#8a93a8"/></svg>
<div class="t" style="left:640.6px;top:32.2px;font-size:16.5px;color:#b5b53a;-webkit-text-stroke:0.15px #b5b53a">$</div>
<div class="t" style="left:659.8px;top:33.2px;font-size:15.5px;color:#b5b53a;-webkit-text-stroke:0.15px #b5b53a">%</div>
<div class="t" style="left:677.7px;top:33.8px;font-size:14px;color:#8a80cc">0</div>
<div class="t" style="left:686px;top:33.8px;font-size:14px;color:#d8d8d8">0</div>
<div class="a" style="left:688px;top:40.5px;width:7.5px;height:1.6px;background:#555"></div>
<div class="a" style="left:684.3px;top:47px;width:1.5px;height:1.5px;background:#8a80cc;border-radius:50%"></div>
<div class="a" style="left:704.8px;top:47px;width:1.5px;height:1.5px;background:#8a80cc;border-radius:50%"></div>
<div class="t" style="left:698px;top:33.8px;font-size:14px;color:#8a80cc">0</div>
<div class="t" style="left:706px;top:33.8px;font-size:14px;color:#d8d8d8">0</div>
<svg style="left:707.5px;top:37.3px;" width="9" height="8" viewBox="0 0 9 8"><path d="M4.5,0V8M0.5,4H8.5" stroke="#444" stroke-width="1.4"/></svg>
<div class="a" style="left:720.0px;top:35.6px;width:1px;height:12.100000000000001px;background:#d0d0d0"></div>
<svg style="left:726.6px;top:34px;" width="15.2" height="14" viewBox="0 0 15.2 14"><path d="M3,2.5H14.5V10H6.5L3.5,13.5V10H1.5V4" fill="none" stroke="#777" stroke-width="1.2"/><path d="M2,0V4M0,2H4" stroke="#3a8ad0" stroke-width="1"/></svg>
<svg style="left:746.9px;top:33.8px;" width="15.1" height="14.5" viewBox="0 0 15.1 14.5"><rect x=".7" y=".7" width="13.7" height="13.1" fill="none" stroke="#4c5570" stroke-width="1.4"/><path d="M0.7,13.8V10L4,7L6.5,9.5L10,5L14.4,10.5V13.8Z" fill="#4c5570"/><path d="M2.5,2.5L4,4M4,2.5L2.5,4" stroke="#4c5570" stroke-width=".8"/></svg>
<svg style="left:765px;top:40.8px;" width="5.5" height="3" viewBox="0 0 5.5 3"><path d="M0,0H5.5L2.75,3Z" fill="#8a93a8"/></svg>
<svg style="left:776.7px;top:33.8px;" width="14.6" height="14.5" viewBox="0 0 14.6 14.5"><rect x="0" y="4.5" width="3.8" height="10" fill="#4c5570"/><rect x="5.4" y="0" width="3.8" height="14.5" fill="#3f86cc"/><rect x="10.8" y="6.5" width="3.8" height="8" fill="#4c5570"/></svg>
<svg style="left:797px;top:33.5px;" width="15.2" height="15.2" viewBox="0 0 15.2 15.2"><circle cx="7.6" cy="7.6" r="7" fill="#eef0f6" stroke="#707a90" stroke-width="1.1"/></svg>
<svg style="left:815px;top:40.8px;" width="5.5" height="3" viewBox="0 0 5.5 3"><path d="M0,0H5.5L2.75,3Z" fill="#8a93a8"/></svg>
<svg style="left:826.8px;top:37.2px;" width="13.6" height="7" viewBox="0 0 13.6 7"><rect x=".8" y=".8" width="7.5" height="5.4" rx="2.7" fill="none" stroke="#555" stroke-width="1.5"/><rect x="5.3" y=".8" width="7.5" height="5.4" rx="2.7" fill="none" stroke="#555" stroke-width="1.5"/></svg>
<div class="t" style="left:846px;top:31.6px;font-size:18.8px;color:#8a7ccc;transform:scaleX(1.14);transform-origin:left">&#937;</div>
<div class="a" style="left:959.4px;top:34.9px;width:14.8px;height:11.8px;background:#1e88e5;border-radius:1px"></div>
<div class="a" style="left:960.8px;top:36.2px;width:6.6px;height:9.2px;background:#fff"></div>
<div class="a" style="left:958.5px;top:48.6px;width:18px;height:0.8px;background:#ccc"></div>
<div class="a" style="left:984.9px;top:36px;width:1px;height:12px;background:#d0d0d0"></div>
<svg style="left:996.2px;top:38px;" width="11.8" height="7" viewBox="0 0 11.8 7"><path d="M0.5,6.5L5.9,1L11.3,6.5" fill="none" stroke="#666" stroke-width="1.2"/></svg>
<div class="a" style="left:3px;top:60.2px;width:73.5px;height:20.3px;background:#fff;border:1px solid #c8c8c8;border-radius:2px"></div>
<div class="t" style="left:7px;top:66.8px;font-size:8.2px;color:#444">L35</div>
<div class="a" style="left:79.3px;top:64px;width:1px;height:12px;background:#ddd"></div>
<div class="t" style="left:86.8px;top:61px;font-family:'Liberation Serif',serif;font-style:italic;font-weight:bold;font-size:14.8px;color:#4a86c0">f</div>
<div class="t" style="left:92.8px;top:66.5px;font-size:11px;font-style:italic;font-weight:bold;color:#4a86c0">x</div>
<div class="t" style="left:107.3px;top:62px;font-size:13px;color:#777">&#8721;</div>
<svg style="left:126px;top:68px;" width="9" height="6" viewBox="0 0 9 6"><path d="M0,0.75H9M0,5.2H9" stroke="#666" stroke-width="1.5"/></svg>
<div class="a" style="left:140.2px;top:63.2px;width:617.5px;height:16.5px;background:#fff;border:1px solid #707070"></div>
<div class="t" style="left:143.3px;top:66.3px;font-size:9.4px;color:#222;transform:scaleX(.95);transform-origin:left">Traffic</div>
<div class="a" style="left:759.2px;top:63.2px;width:13px;height:16.8px;background:#fff;border:1.2px solid #222;border-right:none"></div>
<svg style="left:761.5px;top:69.5px;" width="9" height="5" viewBox="0 0 9 5"><path d="M0,0H9L4.5,5Z" fill="#111"/></svg>
<div class="a" style="left:263px;top:79px;width:394.5px;height:365.8px;border:1px solid #c4c1d8;border-radius:0 0 3px 3px;background:#fff;box-shadow:0 1px 3px rgba(80,80,120,.12)"></div>
<div class="a" style="left:264px;top:80px;width:392.5px;height:27.5px;background:#e9e9ee"></div>
<div class="t" style="left:276.3px;top:87px;font-size:14px;font-weight:bold;color:#8b86b8;letter-spacing:.1px">PICK A COLOR</div>
<svg style="left:640.3px;top:88.8px;" width="10.2" height="9.6" viewBox="0 0 10.2 9.6"><path d="M0.3,0.3L9.9,9.3M9.9,0.3L0.3,9.3" stroke="#9a96c8" stroke-width="1.1"/></svg>
<div class="a" style="left:269.1px;top:113.2px;width:205px;height:260.8px;background:linear-gradient(to bottom,rgba(0,0,0,0),#000),linear-gradient(to right,#fff,rgb(21,0,255))"></div>
<svg style="left:371.5px;top:212.5px;" width="9" height="9" viewBox="0 0 9 9"><circle cx="4.5" cy="4.5" r="3.8" fill="none" stroke="#222" stroke-width="0.9"/></svg>
<div class="a" style="left:483px;top:117px;width:15.3px;height:253.6px;background:linear-gradient(to bottom,#f00 0%,#f0f 16.67%,#00f 33.33%,#0ff 50%,#0f0 66.67%,#ff0 83.33%,#f00 100%)"></div>
<svg style="left:476px;top:113px;" width="31" height="7" viewBox="0 0 31 7"><path d="M0.5,0.5H3L5.5,3.3L3,6.2H0.5Z" fill="#fff" stroke="#777" stroke-width=".8"/><path d="M29.5,0.5H27L24.5,3.3L27,6.2H29.5Z" fill="#fff" stroke="#777" stroke-width=".8"/></svg>
<div class="a" style="left:269.3px;top:379px;width:204.8px;height:21.5px;background:#504999"></div>
<div class="a" style="left:273.7px;top:413.7px;width:60.60000000000002px;height:19.80000000000001px;background:#f1f1f6;border-radius:3px"></div>
<div class="t" style="left:273.7px;top:419.0px;width:60.60000000000002px;text-align:center;font-size:9.4px;color:#555b72"><u>H</u>elp</div>
<div class="a" style="left:519px;top:414.2px;width:60.5px;height:19.80000000000001px;background:#f1f1f6;border-radius:3px"></div>
<div class="t" style="left:519px;top:419.5px;width:60.5px;text-align:center;font-size:9.4px;color:#555b72"><u>C</u>ancel</div>
<div class="a" style="left:585.6px;top:414px;width:60.39999999999998px;height:19.600000000000023px;background:#f1f1f6;border-radius:3px"></div>
<div class="t" style="left:585.6px;top:419.2px;width:60.39999999999998px;text-align:center;font-size:9.4px;color:#555b72"><u>O</u>K</div>
<div class="t" style="left:510.5px;top:115.2px;font-size:10px;font-weight:bold;color:#222">RGB</div>
<div class="t" style="left:510.5px;top:222.5px;font-size:10px;font-weight:bold;color:#222">HSB</div>
<div class="t" style="left:510.5px;top:306.3px;font-size:10px;font-weight:bold;color:#222">CMYK</div>
<svg style="left:519.8px;top:130.8px;" width="13.2" height="13.2" viewBox="0 0 13.2 13.2"><circle cx="6.6" cy="6.6" r="6" fill="#fff" stroke="#666" stroke-width="1"/></svg>
<div class="t" style="left:536.7px;top:132.8px;font-size:9.4px;color:#333"><u>R</u>ed:</div>
<div class="a" style="left:596px;top:129.1px;width:54.6px;height:16.5px;background:#fff;border:1px solid #999"></div>
<div class="t" style="left:599.2px;top:132.75px;font-size:9.4px;color:#333">80</div>
<div class="a" style="left:638.5px;top:130.1px;width:11px;height:14.5px;background:#f3f3f3"></div>
<svg style="left:641.2px;top:132.75px;" width="5.5" height="9.2" viewBox="0 0 5.5 9.2"><path d="M0.5,2.8L2.75,0.3L5,2.8Z M0.5,6.4L2.75,8.9L5,6.4Z" fill="#222"/></svg>
<svg style="left:519.8px;top:151.8px;" width="13.2" height="13.2" viewBox="0 0 13.2 13.2"><circle cx="6.6" cy="6.6" r="6" fill="#fff" stroke="#666" stroke-width="1"/></svg>
<div class="t" style="left:536.7px;top:153.8px;font-size:9.4px;color:#333"><u>G</u>reen:</div>
<div class="a" style="left:596px;top:150.1px;width:54.6px;height:16.5px;background:#fff;border:1px solid #999"></div>
<div class="t" style="left:599.2px;top:153.75px;font-size:9.4px;color:#333">73</div>
<div class="a" style="left:638.5px;top:151.1px;width:11px;height:14.5px;background:#f3f3f3"></div>
<svg style="left:641.2px;top:153.75px;" width="5.5" height="9.2" viewBox="0 0 5.5 9.2"><path d="M0.5,2.8L2.75,0.3L5,2.8Z M0.5,6.4L2.75,8.9L5,6.4Z" fill="#222"/></svg>
<svg style="left:519.8px;top:172.9px;" width="13.2" height="13.2" viewBox="0 0 13.2 13.2"><circle cx="6.6" cy="6.6" r="6" fill="#fff" stroke="#666" stroke-width="1"/></svg>
<div class="t" style="left:536.7px;top:174.9px;font-size:9.4px;color:#333"><u>B</u>lue:</div>
<div class="a" style="left:596px;top:171.2px;width:54.6px;height:16.5px;background:#fff;border:1px solid #999"></div>
<div class="t" style="left:599.2px;top:174.85px;font-size:9.4px;color:#333">153</div>
<div class="a" style="left:638.5px;top:172.2px;width:11px;height:14.5px;background:#f3f3f3"></div>
<svg style="left:641.2px;top:174.85px;" width="5.5" height="9.2" viewBox="0 0 5.5 9.2"><path d="M0.5,2.8L2.75,0.3L5,2.8Z M0.5,6.4L2.75,8.9L5,6.4Z" fill="#222"/></svg>
<svg style="left:519.8px;top:238.8px;" width="13.2" height="13.2" viewBox="0 0 13.2 13.2"><circle cx="6.6" cy="6.6" r="6" fill="#e8ecf4" stroke="#8b95ad" stroke-width="1.1"/><circle cx="6.6" cy="6.6" r="4.4" fill="#4c5570"/></svg>
<div class="t" style="left:536.7px;top:240.8px;font-size:9.4px;color:#333">H<u>u</u>e:</div>
<div class="a" style="left:596px;top:237.1px;width:54.6px;height:16.5px;background:#fff;border:1px solid #999"></div>
<div class="t" style="left:599.2px;top:240.75px;font-size:9.4px;color:#333">245°</div>
<div class="a" style="left:638.5px;top:238.1px;width:11px;height:14.5px;background:#f3f3f3"></div>
<svg style="left:641.2px;top:240.75px;" width="5.5" height="9.2" viewBox="0 0 5.5 9.2"><path d="M0.5,2.8L2.75,0.3L5,2.8Z M0.5,6.4L2.75,8.9L5,6.4Z" fill="#222"/></svg>
<svg style="left:519.8px;top:260.0px;" width="13.2" height="13.2" viewBox="0 0 13.2 13.2"><circle cx="6.6" cy="6.6" r="6" fill="#fff" stroke="#666" stroke-width="1"/></svg>
<div class="t" style="left:536.7px;top:262.0px;font-size:9.4px;color:#333"><u>S</u>aturation:</div>
<div class="a" style="left:596px;top:258.3px;width:54.6px;height:16.5px;background:#fff;border:1px solid #999"></div>
<div class="t" style="left:599.2px;top:261.95px;font-size:9.4px;color:#333">52%</div>
<div class="a" style="left:638.5px;top:259.3px;width:11px;height:14.5px;background:#f3f3f3"></div>
<svg style="left:641.2px;top:261.95px;" width="5.5" height="9.2" viewBox="0 0 5.5 9.2"><path d="M0.5,2.8L2.75,0.3L5,2.8Z M0.5,6.4L2.75,8.9L5,6.4Z" fill="#222"/></svg>
<svg style="left:519.8px;top:281.0px;" width="13.2" height="13.2" viewBox="0 0 13.2 13.2"><circle cx="6.6" cy="6.6" r="6" fill="#fff" stroke="#666" stroke-width="1"/></svg>
<div class="t" style="left:536.7px;top:283.0px;font-size:9.4px;color:#333">Bright<u>n</u>ess:</div>
<div class="a" style="left:596px;top:279.3px;width:54.6px;height:16.5px;background:#fff;border:1px solid #999"></div>
<div class="t" style="left:599.2px;top:282.95px;font-size:9.4px;color:#333">60%</div>
<div class="a" style="left:638.5px;top:280.3px;width:11px;height:14.5px;background:#f3f3f3"></div>
<svg style="left:641.2px;top:282.95px;" width="5.5" height="9.2" viewBox="0 0 5.5 9.2"><path d="M0.5,2.8L2.75,0.3L5,2.8Z M0.5,6.4L2.75,8.9L5,6.4Z" fill="#222"/></svg>
<div class="t" style="left:519px;top:196.6px;font-size:9.4px;color:#333">Hex <u>#</u>:</div>
<div class="a" style="left:596px;top:192.4px;width:54.6px;height:20px;background:#fff;border:1px solid #999"></div>
<div class="t" style="left:599px;top:197px;font-size:9.4px;color:#333">504999</div>
<div class="t" style="left:519px;top:323.20000000000005px;font-size:9.4px;color:#333"><u>C</u>yan:</div>
<div class="a" style="left:596px;top:320.6px;width:54.6px;height:16.0px;background:#fff;border:1px solid #999"></div>
<div class="t" style="left:599.2px;top:324.0px;font-size:9.4px;color:#333">48%</div>
<div class="a" style="left:638.5px;top:321.6px;width:11px;height:14.0px;background:#f3f3f3"></div>
<svg style="left:641.2px;top:324.0px;" width="5.5" height="9.2" viewBox="0 0 5.5 9.2"><path d="M0.5,2.8L2.75,0.3L5,2.8Z M0.5,6.4L2.75,8.9L5,6.4Z" fill="#222"/></svg>
<div class="t" style="left:519px;top:344.65000000000003px;font-size:9.4px;color:#333"><u>M</u>agenta:</div>
<div class="a" style="left:596px;top:342.1px;width:54.6px;height:15.899999999999977px;background:#fff;border:1px solid #999"></div>
<div class="t" style="left:599.2px;top:345.45px;font-size:9.4px;color:#333">52%</div>
<div class="a" style="left:638.5px;top:343.1px;width:11px;height:13.899999999999977px;background:#f3f3f3"></div>
<svg style="left:641.2px;top:345.45px;" width="5.5" height="9.2" viewBox="0 0 5.5 9.2"><path d="M0.5,2.8L2.75,0.3L5,2.8Z M0.5,6.4L2.75,8.9L5,6.4Z" fill="#222"/></svg>
<div class="t" style="left:519px;top:365.90000000000003px;font-size:9.4px;color:#333"><u>Y</u>ellow:</div>
<div class="a" style="left:596px;top:363.3px;width:54.6px;height:16.0px;background:#fff;border:1px solid #999"></div>
<div class="t" style="left:599.2px;top:366.7px;font-size:9.4px;color:#333">0%</div>
<div class="a" style="left:638.5px;top:364.3px;width:11px;height:14.0px;background:#f3f3f3"></div>
<svg style="left:641.2px;top:366.7px;" width="5.5" height="9.2" viewBox="0 0 5.5 9.2"><path d="M0.5,2.8L2.75,0.3L5,2.8Z M0.5,6.4L2.75,8.9L5,6.4Z" fill="#222"/></svg>
<div class="t" style="left:519px;top:387.1px;font-size:9.4px;color:#333"><u>K</u>ey:</div>
<div class="a" style="left:596px;top:384.5px;width:54.6px;height:16.0px;background:#fff;border:1px solid #999"></div>
<div class="t" style="left:599.2px;top:387.9px;font-size:9.4px;color:#333">40%</div>
<div class="a" style="left:638.5px;top:385.5px;width:11px;height:14.0px;background:#f3f3f3"></div>
<svg style="left:641.2px;top:387.9px;" width="5.5" height="9.2" viewBox="0 0 5.5 9.2"><path d="M0.5,2.8L2.75,0.3L5,2.8Z M0.5,6.4L2.75,8.9L5,6.4Z" fill="#222"/></svg>
<div class="a" style="left:770.5px;top:57.5px;width:245px;height:462px;background:#fff;border-left:1px solid #e6e6e6"></div>
<div class="a" style="left:1015.1px;top:58px;width:8.9px;height:462px;background:#c4c4c4"></div>
<div class="a" style="left:1017.4px;top:59.8px;width:4.6px;height:356px;background:#777;border-radius:2.3px"></div>
<div class="a" style="left:771.5px;top:58.5px;width:242px;height:20.5px;background:linear-gradient(to bottom,#efefef,#f8f8f8)"></div>
<svg style="left:776.5px;top:67.35000000000001px;" width="8" height="4.5" viewBox="0 0 8 4.5"><path d="M0.4,4.2L4,0.6L7.6,4.2" fill="none" stroke="#555" stroke-width="1"/></svg>
<div class="t" style="left:787.8px;top:65.95px;font-size:9.6px;font-weight:bold;color:#222">Style</div>
<div class="a" style="left:776.7px;top:86.3px;width:178.89999999999998px;height:20.299999999999997px;background:#fff;border:1px solid #9a9a9a"></div>
<div class="t" style="left:779.2px;top:91.05px;font-size:9.4px;color:#333;">Default</div>
<svg style="left:942.6px;top:94.25px;" width="7.5" height="4" viewBox="0 0 7.5 4"><path d="M0,0H7.5L3.75,4Z" fill="#111"/></svg>
<div class="t" style="left:965px;top:88px;font-size:15px;font-style:italic;color:#666">A</div>
<svg style="left:974.5px;top:97px;" width="8" height="8" viewBox="0 0 8 8"><circle cx="4" cy="4" r="3" fill="none" stroke="#3a8ad0" stroke-width="1.2"/></svg>
<div class="t" style="left:988.5px;top:88px;font-size:15px;font-style:italic;color:#666">A</div>
<svg style="left:995px;top:96px;" width="9" height="9" viewBox="0 0 9 9"><path d="M4.5,0.5V8.5M0.5,4.5H8.5" stroke="#3a8ad0" stroke-width="1.4"/></svg>
<div class="a" style="left:771.5px;top:113.7px;width:242px;height:19.799999999999997px;background:linear-gradient(to bottom,#efefef,#f8f8f8)"></div>
<svg style="left:776.5px;top:121.5px;" width="8" height="4.5" viewBox="0 0 8 4.5"><path d="M0.4,4.2L4,0.6L7.6,4.2" fill="none" stroke="#555" stroke-width="1"/></svg>
<div class="t" style="left:787.8px;top:119.8px;font-size:9.6px;font-weight:bold;color:#222">Character</div>
<svg style="left:1002.5px;top:124.6px;" width="6" height="6" viewBox="0 0 6 6"><rect x=".4" y=".4" width="5.2" height="5.2" fill="#fff" stroke="#888" stroke-width=".7"/><path d="M1.5,1.5L4.5,4.5M2.5,4.5H4.5V2.5" fill="none" stroke="#333" stroke-width=".9"/></svg>
<div class="a" style="left:776.5px;top:140px;width:185.0px;height:20.900000000000006px;background:#fff;border:1px solid #9a9a9a"></div>
<div class="t" style="left:779.0px;top:144.14999999999998px;font-size:9.4px;color:#333;font-style:italic">Georgia</div>
<svg style="left:948.5px;top:147.35px;" width="7.5" height="4" viewBox="0 0 7.5 4"><path d="M0,0H7.5L3.75,4Z" fill="#111"/></svg>
<div class="a" style="left:966px;top:140px;width:43px;height:20.900000000000006px;background:#fff;border:1px solid #9a9a9a"></div>
<div class="t" style="left:968.5px;top:144.14999999999998px;font-size:9.4px;color:#333;">11</div>
<svg style="left:996px;top:147.35px;" width="7.5" height="4" viewBox="0 0 7.5 4"><path d="M0,0H7.5L3.75,4Z" fill="#111"/></svg>
<div class="a" style="left:777px;top:173px;width:23.7px;height:25px;background:#eef0f5;border:1px solid #8c9ab2;border-radius:2px"></div>
<div class="t" style="left:780.3px;top:175.5px;font-size:18.3px;color:#555">B</div>
<svg style="left:808px;top:178px;" width="10" height="15" viewBox="0 0 10 15"><path d="M7,0.7L3,14.3M4,0.7H10M0,14.3H6" fill="none" stroke="#aaa" stroke-width="1.3"/></svg>
<svg style="left:832px;top:178px;" width="13.5" height="15" viewBox="0 0 13.5 15"><path d="M1.5,0V7Q1.5,12 6.75,12Q12,12 12,7V0" fill="none" stroke="#999" stroke-width="1.3"/><path d="M0,14.3H13.5" stroke="#999" stroke-width="1"/></svg>
<svg style="left:852px;top:184px;" width="6" height="3.5" viewBox="0 0 6 3.5"><path d="M0,0H6L3,3.5Z" fill="#222"/></svg>
<svg style="left:864px;top:177px;" width="14.5" height="15.5" viewBox="0 0 14.5 15.5"><path d="M11,2Q9,0.5 7,0.5Q3.2,0.5 3.2,3.5Q3.2,5.5 7.2,6.5Q11,7.5 11,10.8Q11,14.5 7,14.5Q4.5,14.5 3.2,13" fill="none" stroke="#999" stroke-width="1.4"/><path d="M0,7.5H14.5" stroke="#aaa" stroke-width="1"/></svg>
<div class="t" style="left:889.5px;top:177.5px;font-size:16px;font-weight:bold;color:#999;text-shadow:1px 1px 0 #ccc">A</div>
<div class="t" style="left:964.6px;top:176.3px;font-size:17px;font-weight:bold;color:#5e5e5e">A</div>
<svg style="left:976.5px;top:177px;" width="5" height="8" viewBox="0 0 5 8"><path d="M2.5,7.5V0.8M0.5,2.7L2.5,0.5L4.5,2.7" fill="none" stroke="#3a8ad0" stroke-width="1"/></svg>
<div class="t" style="left:988.8px;top:180.5px;font-size:13.3px;font-weight:bold;color:#5e5e5e">A</div>
<svg style="left:999px;top:177.5px;" width="5" height="8" viewBox="0 0 5 8"><path d="M2.5,0.5V7.2M0.5,5.3L2.5,7.5L4.5,5.3" fill="none" stroke="#3a8ad0" stroke-width="1"/></svg>
<div class="t" style="left:780.6px;top:208.8px;font-size:14.3px;color:#4c5570">A</div>
<div class="a" style="left:779px;top:222.4px;width:15.3px;height:4.5px;background:#d0201c"></div>
<svg style="left:800px;top:216.5px;" width="6" height="3.5" viewBox="0 0 6 3.5"><path d="M0,0H6L3,3.5Z" fill="#222"/></svg>
<div class="t" style="left:923px;top:211.2px;font-size:10.3px;color:#555">AV</div>
<svg style="left:923px;top:222px;" width="15" height="4" viewBox="0 0 15 4"><path d="M0.5,2H14.5M3,0.3L0.5,2L3,3.7M12,0.3L14.5,2L12,3.7" fill="none" stroke="#3a8ad0" stroke-width=".9"/></svg>
<svg style="left:946px;top:216.5px;" width="6" height="3.5" viewBox="0 0 6 3.5"><path d="M0,0H6L3,3.5Z" fill="#222"/></svg>
<div class="t" style="left:964.4px;top:212.7px;font-size:13.5px;color:#555">X</div>
<div class="t" style="left:974.8px;top:211.6px;font-size:8.5px;font-weight:bold;color:#4a86c8">2</div>
<div class="t" style="left:988.6px;top:212.7px;font-size:13.5px;color:#555">X</div>
<div class="t" style="left:998.2px;top:219.3px;font-size:8.5px;font-weight:bold;color:#4a86c8">2</div>
<div class="a" style="left:771.5px;top:236.8px;width:242px;height:22.399999999999977px;background:linear-gradient(to bottom,#efefef,#f8f8f8)"></div>
<svg style="left:776.5px;top:245.2px;" width="8" height="4.5" viewBox="0 0 8 4.5"><path d="M0.4,4.2L4,0.6L7.6,4.2" fill="none" stroke="#555" stroke-width="1"/></svg>
<div class="t" style="left:787.8px;top:243.2px;font-size:9.6px;font-weight:bold;color:#222">Number Format</div>
<svg style="left:1002.5px;top:249.0px;" width="6" height="6" viewBox="0 0 6 6"><rect x=".4" y=".4" width="5.2" height="5.2" fill="#fff" stroke="#888" stroke-width=".7"/><path d="M1.5,1.5L4.5,4.5M2.5,4.5H4.5V2.5" fill="none" stroke="#333" stroke-width=".9"/></svg>
<div class="a" style="left:776.7px;top:261.5px;width:146.0999999999999px;height:25.0px;background:#fff;border:1px solid #9a9a9a"></div>
<div class="t" style="left:779.2px;top:266.7px;font-size:9.4px;color:#333;">General</div>
<svg style="left:909.8px;top:269.9px;" width="7.5" height="4" viewBox="0 0 7.5 4"><path d="M0,0H7.5L3.75,4Z" fill="#111"/></svg>
<svg style="left:930px;top:269px;" width="17" height="12" viewBox="0 0 17 12"><rect x=".5" y=".5" width="15.8" height="8" fill="#fff" stroke="#4a86c8" stroke-width="1"/><circle cx="8.3" cy="4.3" r="1.9" fill="#4a86c8"/><circle cx="3.8" cy="9.3" r="2" fill="#fbe6cc" stroke="#f0c890" stroke-width=".6"/><circle cx="8" cy="9.3" r="2" fill="#fbe6cc" stroke="#f0c890" stroke-width=".6"/><rect x="11" y="5.5" width="4.5" height="6" rx="1.5" fill="#fbe6cc" stroke="#f0c890" stroke-width=".6"/></svg>
<svg style="left:952px;top:272px;" width="6" height="3.5" viewBox="0 0 6 3.5"><path d="M0,0H6L3,3.5Z" fill="#222"/></svg>
<div class="t" style="left:964.6px;top:265.3px;font-size:16.5px;color:#b5bd4a">%</div>
<div class="t" style="left:986.8px;top:265.5px;font-size:15.5px;color:#6a6a6a">0</div>
<div class="t" style="left:995.3px;top:265.5px;font-size:15.5px;color:#6a6a6a">0</div>
<div class="a" style="left:995px;top:280px;width:1.3px;height:1.3px;background:#555"></div>
<div class="t" style="left:776.7px;top:291.7px;font-size:9.4px;color:#333"><u>D</u>ecimal places:</div>
<div class="t" style="left:940.5px;top:291.7px;font-size:9.4px;color:#333">Leading <u>z</u>eroes:</div>
<div class="a" style="left:776.7px;top:306.8px;width:69.0px;height:16.0px;background:#fff;border:1px solid #9a9a9a;border-radius:2px"></div>
<svg style="left:836.7px;top:310.8px;" width="5" height="8" viewBox="0 0 5 8"><path d="M0.3,2.8L2.5,0.3L4.7,2.8Z M0.3,5.2L2.5,7.7L4.7,5.2Z" fill="#222"/></svg>
<div class="a" style="left:940.5px;top:306.8px;width:68.5px;height:16.0px;background:#fff;border:1px solid #9a9a9a;border-radius:2px"></div>
<div class="t" style="left:944.0px;top:310.0px;font-size:9.4px;color:#333">1</div>
<svg style="left:1000px;top:310.8px;" width="5" height="8" viewBox="0 0 5 8"><path d="M0.3,2.8L2.5,0.3L4.7,2.8Z M0.3,5.2L2.5,7.7L4.7,5.2Z" fill="#222"/></svg>
<div class="a" style="left:777.6px;top:329.3px;width:12px;height:12px;background:#fff;border:1px solid #777;border-radius:1.5px"></div>
<div class="t" style="left:792.8000000000001px;top:330.1px;font-size:9.4px;color:#333"><u>N</u>egative numbers in red</div>
<div class="a" style="left:777.6px;top:346.6px;width:12px;height:12px;background:#fff;border:1px solid #777;border-radius:1.5px"></div>
<div class="t" style="left:792.8000000000001px;top:347.40000000000003px;font-size:9.4px;color:#333"><u>T</u>housands separator</div>
<div class="a" style="left:771.5px;top:362.7px;width:242px;height:20.30000000000001px;background:linear-gradient(to bottom,#efefef,#f8f8f8)"></div>
<svg style="left:776.5px;top:370.40000000000003px;" width="8" height="4.5" viewBox="0 0 8 4.5"><path d="M0.4,4.2L4,0.6L7.6,4.2" fill="none" stroke="#555" stroke-width="1"/></svg>
<div class="t" style="left:787.8px;top:368.55px;font-size:9.6px;font-weight:bold;color:#222">Alignment</div>
<svg style="left:1002.5px;top:373.85px;" width="6" height="6" viewBox="0 0 6 6"><rect x=".4" y=".4" width="5.2" height="5.2" fill="#fff" stroke="#888" stroke-width=".7"/><path d="M1.5,1.5L4.5,4.5M2.5,4.5H4.5V2.5" fill="none" stroke="#333" stroke-width=".9"/></svg>
<svg style="left:782.3px;top:393px;" width="15" height="15" viewBox="0 0 15 15"><rect x="0" y="0.0" width="14" height="1.2" fill="#c8c8c8"/><rect x="0" y="2.9" width="9" height="1.2" fill="#c8c8c8"/><rect x="0" y="5.8" width="14" height="1.2" fill="#c8c8c8"/><rect x="0" y="8.7" width="9" height="1.2" fill="#c8c8c8"/><rect x="0" y="11.6" width="14" height="1.2" fill="#c8c8c8"/></svg>
<svg style="left:807px;top:393px;" width="15" height="15" viewBox="0 0 15 15"><rect x="0" y="0.0" width="14" height="1.2" fill="#c8c8c8"/><rect x="2.5" y="2.9" width="9.0" height="1.2" fill="#c8c8c8"/><rect x="0" y="5.8" width="14" height="1.2" fill="#c8c8c8"/><rect x="2.5" y="8.7" width="9.0" height="1.2" fill="#c8c8c8"/><rect x="0" y="11.6" width="14" height="1.2" fill="#c8c8c8"/></svg>
<svg style="left:832.5px;top:393px;" width="15" height="15" viewBox="0 0 15 15"><rect x="0" y="0.0" width="14" height="1.2" fill="#c8c8c8"/><rect x="5" y="2.9" width="9" height="1.2" fill="#c8c8c8"/><rect x="0" y="5.8" width="14" height="1.2" fill="#c8c8c8"/><rect x="5" y="8.7" width="9" height="1.2" fill="#c8c8c8"/><rect x="0" y="11.6" width="14" height="1.2" fill="#c8c8c8"/></svg>
<svg style="left:856px;top:393px;" width="15" height="15" viewBox="0 0 15 15"><rect x="0" y="0.0" width="14" height="1.2" fill="#c8c8c8"/><rect x="0" y="2.9" width="14" height="1.2" fill="#c8c8c8"/><rect x="0" y="5.8" width="14" height="1.2" fill="#c8c8c8"/><rect x="0" y="8.7" width="14" height="1.2" fill="#c8c8c8"/><rect x="0" y="11.6" width="14" height="1.2" fill="#c8c8c8"/></svg>
<div class="a" style="left:884.5px;top:387.8px;width:22px;height:23.8px;background:#eef0f5;border:1px solid #8c9ab2;border-radius:2px"></div>
<div class="t" style="left:893px;top:389.5px;font-size:17px;font-weight:bold;color:#4c5570">&#182;</div>
<svg style="left:887px;top:398.5px;" width="10" height="7" viewBox="0 0 10 7"><path d="M0,3.5H9M6,0.5L9,3.5L6,6.5" fill="none" stroke="#3a8ad0" stroke-width="1.1"/></svg>
<div class="t" style="left:912px;top:389.5px;font-size:17px;font-weight:bold;color:#4c5570">&#182;</div>
<svg style="left:918.5px;top:398.5px;" width="10" height="7" viewBox="0 0 10 7"><path d="M10,3.5H1M4,0.5L1,3.5L4,6.5" fill="none" stroke="#3a8ad0" stroke-width="1.1"/></svg>
<svg style="left:941.2px;top:393px;" width="13" height="15" viewBox="0 0 13 15"><path d="M0,0.6H13M2,3.2H11" stroke="#666" stroke-width="1"/><path d="M6.5,14V6M4,8.5L6.5,6L9,8.5" fill="none" stroke="#3a8ad0" stroke-width="1"/></svg>
<svg style="left:966px;top:392px;" width="13" height="16" viewBox="0 0 13 16"><path d="M0,7.4H13M2,9.4H11" stroke="#666" stroke-width="1"/><path d="M6.5,0V5.5M4,3.5L6.5,5.8L9,3.5M6.5,16V11.3M4,13.5L6.5,11.2L9,13.5" fill="none" stroke="#3a8ad0" stroke-width="1"/></svg>
<div class="a" style="left:985.3px;top:388px;width:22.4px;height:23.6px;background:#eef0f5;border:1px solid #8c9ab2;border-radius:2px"></div>
<svg style="left:990px;top:391.5px;" width="13" height="16" viewBox="0 0 13 16"><path d="M0,12.6H13M2,10H11" stroke="#666" stroke-width="1"/><path d="M6.5,0V7.5M4,5L6.5,7.6L9,5" fill="none" stroke="#3a8ad0" stroke-width="1"/></svg>
<div class="t" style="left:776.7px;top:428.5px;font-size:9.4px;color:#aaa"><u>I</u>ndent:</div>
<svg style="left:815px;top:424.5px;" width="14" height="16" viewBox="0 0 14 16"><path d="M0.2,0.9H14M6.8,4.2H14M6.8,7.8H14M6.8,11.2H14M0.2,14.7H14" stroke="#555" stroke-width="0.9"/><path d="M0,6H5.5M3.2,3.6L5.6,6L3.2,8.4" fill="none" stroke="#3a8ad0" stroke-width="1"/></svg>
<svg style="left:840px;top:424.5px;" width="14" height="16" viewBox="0 0 14 16"><path d="M0.2,0.9H14M0.2,14.7H14" stroke="#b8c0cc" stroke-width="0.9"/><path d="M6.5,4.2H14M6.5,7.8H14M6.5,11.2H14" stroke="#c8c0e8" stroke-width="0.9"/><path d="M3.6,3.2L0.2,6L3.6,8.8Z" fill="#6a5cb0"/></svg>
<div class="a" style="left:942.2px;top:420.4px;width:12px;height:12px;background:#fff;border:1px solid #ccc;border-radius:1.5px"></div>
<div class="t" style="left:957.4000000000001px;top:421.2px;font-size:9.4px;color:#aaa"><u>M</u>erge cells</div>
<div class="a" style="left:942.2px;top:438px;width:12px;height:12px;background:#fff;border:1px solid #777;border-radius:1.5px"></div>
<div class="t" style="left:957.4000000000001px;top:438.8px;font-size:9.4px;color:#333"><u>W</u>rap text</div>
<div class="a" style="left:776.7px;top:450px;width:83.0px;height:16px;background:#fff;border:1px solid #bbb;border-radius:2px"></div>
<div class="t" style="left:780.2px;top:453.2px;font-size:9.4px;color:#999">0 pt</div>
<svg style="left:850.7px;top:454.0px;" width="5" height="8" viewBox="0 0 5 8"><path d="M0.3,2.8L2.5,0.3L4.7,2.8Z M0.3,5.2L2.5,7.7L4.7,5.2Z" fill="#222"/></svg>
<div class="t" style="left:776.7px;top:480.5px;font-size:9.4px;color:#333">Text <u>o</u>rientation:</div>
<div class="a" style="left:854.6px;top:474.4px;width:50.9px;height:23.1px;background:#fff;border:1px solid #999"></div>
<div class="t" style="left:858px;top:477.5px;font-size:9.4px;color:#333">0°</div>
<svg style="left:893.5px;top:482.2px;" width="7.5" height="4" viewBox="0 0 7.5 4"><path d="M0,0H7.5L3.75,4Z" fill="#111"/></svg>
<div class="a" style="left:951.4px;top:475.5px;width:15px;height:19.5px;background:#fff;border:1px solid #ddd;border-left:2px solid #333;border-top:1px solid #333"></div>
<svg style="left:954.9px;top:482px;" width="9" height="8" viewBox="0 0 9 8"><path d="M2,1H8.5L6.5,7H0Z" fill="none" stroke="#3a8ad0" stroke-width=".9"/></svg>
<div class="a" style="left:972px;top:475.5px;width:15px;height:19.5px;background:#fff;border:1px solid #ddd;border-left:2px solid #333;border-top:1px solid #333"></div>
<svg style="left:975.5px;top:482px;" width="9" height="8" viewBox="0 0 9 8"><path d="M2,1H8.5L6.5,7H0Z" fill="#eee" stroke="#555" stroke-width=".9"/><path d="M0,7H6.5" stroke="#3a8ad0" stroke-width="1"/></svg>
<div class="a" style="left:992px;top:475.5px;width:15px;height:19.5px;background:#fff;border:1px solid #1e88e5;border-left:2px solid #333;border-top:1px solid #333"></div>
<div class="a" style="left:996px;top:480px;width:8px;height:10px;border:1px solid #777"></div>
<div class="a" style="left:777.6px;top:505.3px;width:12px;height:12px;background:#fff;border:1px solid #777;border-radius:1.5px"></div>
<div class="t" style="left:792.8000000000001px;top:506.1px;font-size:9.4px;color:#333"><u>V</u>ertically stacked</div>
<div class="a" style="left:0px;top:497px;width:770.5px;height:22.5px;background:#fff"></div>
<div class="a" style="left:0px;top:496.5px;width:770.5px;height:1px;background:#eee"></div>
<div class="a" style="left:0px;top:520px;width:1024px;height:1px;background:#cfcfcf"></div>
<svg style="left:7.5px;top:505.5px;" width="8" height="9" viewBox="0 0 8 9"><path d="M0.9,0.5V8.5M6.8,0.6L2.6,4.5L6.8,8.4" fill="none" stroke="#5a6070" stroke-width="1.3"/></svg>
<svg style="left:25px;top:504.5px;" width="13.5" height="10.5" viewBox="0 0 13.5 10.5"><path d="M10.8,3.7V0.7H3.5L0.7,3.5V9.8H10.8V6.8" fill="none" stroke="#5a6070" stroke-width="1.4"/><path d="M6.4,3.2L3.8,5.25L6.4,7.3Z" fill="#5a6070"/><path d="M6,5.25H13" stroke="#5a6070" stroke-width="1"/></svg>
<svg style="left:44px;top:504.5px;" width="13.5" height="10.5" viewBox="0 0 13.5 10.5"><path d="M2.7,3.7V0.7H10L12.8,3.5V9.8H2.7V6.8" fill="none" stroke="#5a6070" stroke-width="1.4"/><path d="M7.1,3.2L9.7,5.25L7.1,7.3Z" fill="#5a6070"/><path d="M0.5,5.25H7.5" stroke="#5a6070" stroke-width="1"/></svg>
<svg style="left:66.5px;top:505.5px;" width="8" height="9" viewBox="0 0 8 9"><path d="M7.1,0.5V8.5M1.2,0.6L5.4,4.5L1.2,8.4" fill="none" stroke="#5a6070" stroke-width="1.3"/></svg>
<svg style="left:87.8px;top:505.3px;" width="9" height="9" viewBox="0 0 9 9"><path d="M4.5,0V9M0,4.5H9" stroke="#3a8a96" stroke-width="1.5"/></svg>
<div class="a" style="left:108.3px;top:498.2px;width:57.4px;height:20.3px;border:1px solid #a8d0dc;border-top:none;border-radius:0 0 3px 3px;background:#fff"></div>
<div class="t" style="left:115.9px;top:504.5px;font-size:9.2px;color:#555">Dashboard</div>
<div class="a" style="left:169.2px;top:500px;width:31.4px;height:17.5px;background:#f0f0f6;border-radius:2px"></div>
<div class="t" style="left:175.5px;top:504.5px;font-size:9.2px;color:#555">Data</div>
<div class="a" style="left:0px;top:520.5px;width:1024px;height:24.5px;background:#fff"></div>
<div class="a" style="left:7.2px;top:525.9px;width:146.6px;height:13.7px;background:#f0f8fb;border:1px solid #7fb9ca;border-radius:2px"></div>
<div class="t" style="left:10.5px;top:528.9px;font-size:9px;color:#999">Search</div>
<svg style="left:160px;top:528.5px;" width="14" height="7" viewBox="0 0 14 7"><path d="M0.5,6.5L7,0.8L13.5,6.5" fill="none" stroke="#e0e0e0" stroke-width="1"/></svg>
<svg style="left:181px;top:528.5px;" width="14" height="7" viewBox="0 0 14 7"><path d="M0.5,0.5L7,6.2L13.5,0.5" fill="none" stroke="#e0e0e0" stroke-width="1"/></svg>
<div class="a" style="left:205.8px;top:526px;width:1px;height:13px;background:#d8d8d8"></div>
<div class="t" style="left:213.2px;top:528.9px;font-size:8.9px;color:#555">Sheet 1 of 2</div>
<div class="a" style="left:267.8px;top:526px;width:1px;height:13px;background:#d8d8d8"></div>
<div class="a" style="left:273.3px;top:526px;width:84.2px;height:12.5px;background:#efefef;border-radius:1px"></div>
<div class="t" style="left:277px;top:528.9px;font-size:8.9px;color:#777">Select multiple cells</div>
<div class="a" style="left:363.6px;top:526px;width:1px;height:13px;background:#d8d8d8"></div>
<div class="a" style="left:369.2px;top:526px;width:88.3px;height:12.5px;background:#efefef;border-radius:1px"></div>
<div class="t" style="left:372.3px;top:528.9px;font-size:8.9px;color:#777">Insert mode: inactive</div>
<div class="a" style="left:463px;top:526px;width:1px;height:13px;background:#d8d8d8"></div>
<div class="t" style="left:471px;top:528.9px;font-size:8.3px;color:#222;-webkit-text-stroke:0.15px #222">English (USA)</div>
<svg style="left:525.5px;top:531.5px;" width="5" height="3" viewBox="0 0 5 3"><path d="M0,0H5L2.5,3Z" fill="#999"/></svg>
<div class="a" style="left:537.2px;top:526px;width:1px;height:13px;background:#d8d8d8"></div>
<div class="t" style="left:544px;top:528.9px;font-size:8.9px;color:#555">Standard selection</div>
<div class="a" style="left:623.7px;top:526px;width:1px;height:13px;background:#d8d8d8"></div>
<div class="t" style="left:631px;top:528.9px;font-size:8.9px;color:#555">Average: ; Sum: 0</div>
<svg style="left:708px;top:531.5px;" width="5" height="3" viewBox="0 0 5 3"><path d="M0,0H5L2.5,3Z" fill="#777"/></svg>
<div class="a" style="left:724.9px;top:526px;width:1px;height:13px;background:#d8d8d8"></div>
<svg style="left:921.8px;top:526.4px;" width="14.5" height="14" viewBox="0 0 14.5 14"><circle cx="6" cy="6" r="5.3" fill="none" stroke="#4c5570" stroke-width="1.1"/><path d="M10,10L13.8,13.8" stroke="#4c5570" stroke-width="1.3"/><text x="4" y="9.2" font-size="8" fill="#3a8ad0" font-family="Liberation Sans">1</text></svg>
<div class="a" style="left:946.3px;top:532.8px;width:6px;height:1.2px;background:#3a8ad0"></div>
<div class="t" style="left:967.7px;top:528.4px;font-size:9.4px;color:#444">100%</div>
<svg style="left:995px;top:531.5px;" width="6" height="3.5" viewBox="0 0 6 3.5"><path d="M0,0H6L3,3.5Z" fill="#999"/></svg>
<svg style="left:1010.5px;top:529px;" width="6.5" height="6.5" viewBox="0 0 6.5 6.5"><path d="M3.25,0V6.5M0,3.25H6.5" stroke="#3a8ad0" stroke-width="1.1"/></svg>
</body></html>
